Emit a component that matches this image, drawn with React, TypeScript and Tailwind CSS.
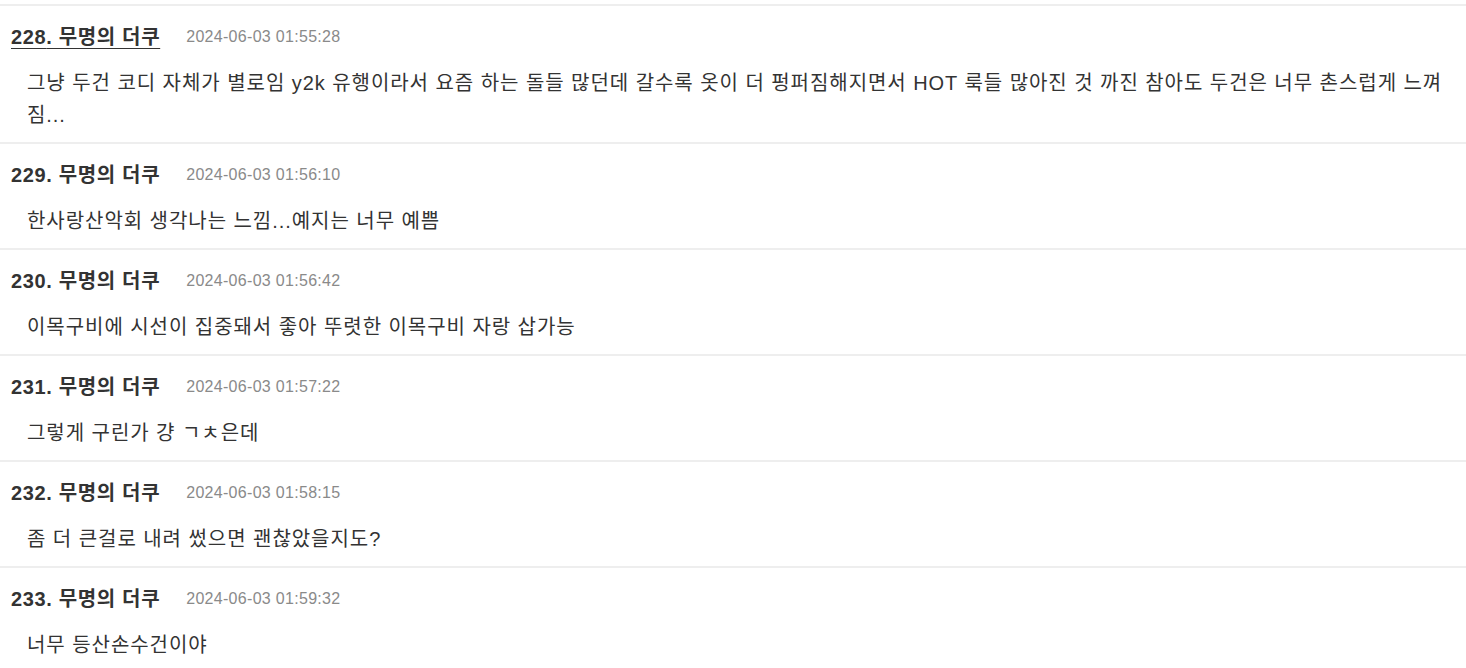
import React from "react";

type Comment = {
  no: number;
  date: string;
  text: string;
  hover?: boolean;
};

const comments: Comment[] = [
  {
    no: 228,
    date: "2024-06-03 01:55:28",
    text: "그냥 두건 코디 자체가 별로임 y2k 유행이라서 요즘 하는 돌들 많던데 갈수록 옷이 더 펑퍼짐해지면서 HOT 룩들 많아진 것 까진 참아도 두건은 너무 촌스럽게 느껴짐...",
    hover: true,
  },
  { no: 229, date: "2024-06-03 01:56:10", text: "한사랑산악회 생각나는 느낌...예지는 너무 예쁨" },
  { no: 230, date: "2024-06-03 01:56:42", text: "이목구비에 시선이 집중돼서 좋아 뚜렷한 이목구비 자랑 삽가능" },
  { no: 231, date: "2024-06-03 01:57:22", text: "그렇게 구린가 걍 ㄱㅊ은데" },
  { no: 232, date: "2024-06-03 01:58:15", text: "좀 더 큰걸로 내려 썼으면 괜찮았을지도?" },
  { no: 233, date: "2024-06-03 01:59:32", text: "너무 등산손수건이야" },
];

const CommentItem = ({ c }: { c: Comment }) => {
  return (
    <li className="border-t-2 border-[#eeeeee] pl-[11px] pr-[8px] pt-[16px] pb-[11px]">
      <div className="flex items-center h-[30px]">
        <span
          className={`text-[20px] tracking-[0.65px] font-bold text-[#333333] ${c.hover ? "underline underline-offset-[4px] decoration-[1px]" : ""}`}
        >
          {c.no}. 무명의 더쿠
        </span>
        <span className="ml-[26px] text-[16px] tracking-[0.3px] text-[#8a8a8a]">{c.date}</span>
      </div>
      <div className="mt-[15px] pl-[16px] text-[20px] tracking-[0.95px] leading-[32px] text-[#333333]">
        {c.text}
      </div>
    </li>
  );
};

export default function App() {
  return (
    <div
      className="w-full h-[668px] overflow-hidden bg-white pt-[4px]"
      style={{ fontFamily: '"Liberation Sans", "Noto Sans CJK KR", sans-serif' }}
    >
      <ul>
        {comments.map((c) => (
          <CommentItem key={c.no} c={c} />
        ))}
      </ul>
    </div>
  );
}
